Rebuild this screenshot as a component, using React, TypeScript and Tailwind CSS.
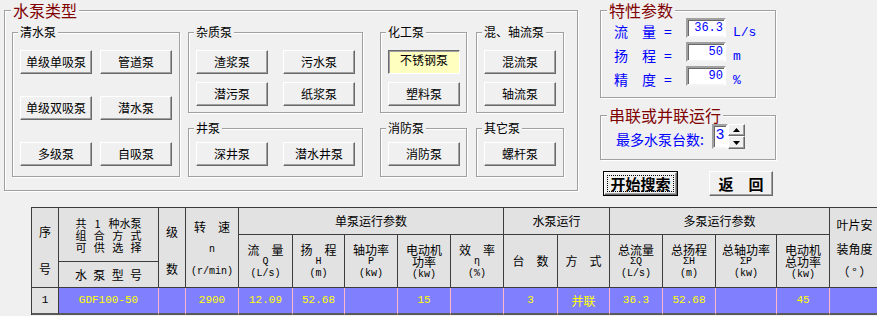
import React from 'react';

const cjk = "font-['Noto_Sans_CJK_SC',sans-serif]";
const mono = "font-['Liberation_Mono',monospace]";
const raised =
  'border border-t-white border-l-white border-r-[#696969] border-b-[#696969] shadow-[inset_-1px_-1px_0_#a0a0a0] bg-[#f0f0f0]';
const sunken =
  'border-2 border-t-[#a0a0a0] border-l-[#a0a0a0] border-r-white border-b-[#f4f4f4] shadow-[inset_1px_1px_0_#696969] bg-white';

const Group: React.FC<{ title: string; big?: boolean; className?: string; children?: React.ReactNode }> = ({
  title, big, className = '', children
}) => (
  <div className={`relative border border-[#a0a0a0] shadow-[inset_1px_1px_0_#ffffff,1px_1px_0_#ffffff] ${className}`}>
    <span
      className={`absolute top-[-1px] -translate-y-1/2 bg-[#f0f0f0] px-[2px] whitespace-nowrap ${
        big ? 'left-[6px] text-[16px] leading-[16px] text-[#800000]' : 'left-[5px] text-[12px] leading-[14px] text-black'
      }`}
    >
      {title}
    </span>
    {children}
  </div>
);

const Btn: React.FC<{ children: React.ReactNode; pressed?: boolean }> = ({ children, pressed }) =>
  pressed ? (
    <div className="w-[72px] h-[24px] flex justify-center pt-[2px] text-[12px] leading-[14px] border border-t-[#696969] border-l-[#696969] border-r-white border-b-white shadow-[inset_1px_1px_0_#a0a0a0] bg-[#ffffc0]">
      {children}
    </div>
  ) : (
    <div className={`w-[72px] h-[24px] flex items-center justify-center text-[12px] leading-[14px] ${raised}`}>{children}</div>
  );

const Arrow: React.FC<{ down?: boolean }> = ({ down }) => (
  <svg width="7" height="4" viewBox="0 0 7 4">
    {down ? <polygon points="0,0 7,0 3.5,4" fill="#000" /> : <polygon points="0,4 7,4 3.5,0" fill="#000" />}
  </svg>
);

const hdr = 'bg-[#e2e2e2] border-r border-b border-[#3c3c3c] flex flex-col items-center text-black';
const cell = 'bg-[#8080ff] border-r border-r-[#ffb8c8] border-b-2 border-b-[#5a5a5a] flex items-center justify-center text-[#ffff00]';

const Spread: React.FC<{ items: string[]; w: string }> = ({ items, w }) => (
  <div className={`flex justify-between ${w}`}>
    {items.map((t, i) => (
      <span key={i}>{t}</span>
    ))}
  </div>
);

const Sub: React.FC<{ top: React.ReactNode; mid?: string; unit: string }> = ({ top, mid, unit }) => (
  <div className={`${hdr} row-span-2 pt-[9px]`}>
    <div className="text-[12px] leading-[12px] whitespace-pre text-center">{top}</div>
    {mid !== undefined && <div className={`${mono} text-[10px] leading-[11px] whitespace-pre`}>{mid}</div>}
    <div className={`${mono} text-[10px] leading-[12px] mt-[1px] whitespace-pre`}>{unit}</div>
  </div>
);

export default function App() {
  return (
    <div className={`w-[877px] h-[316px] bg-[#f0f0f0] overflow-hidden ${cjk} text-black`}>
      <div className="flex items-start h-[207px] pt-[10px] pl-[4px]">
        {/* 水泵类型 */}
        <Group title="水泵类型" big className="w-[574px] h-[181px] pl-[7px] pt-[21px] flex items-start">
          <Group title="清水泵" className="w-[168px] h-[145px] pl-[7px] pt-[17px]">
            <div className="grid grid-cols-[72px_72px] gap-x-[8px] gap-y-[22px]">
              <Btn>单级单吸泵</Btn>
              <Btn>管道泵</Btn>
              <Btn>单级双吸泵</Btn>
              <Btn>潜水泵</Btn>
              <Btn>多级泵</Btn>
              <Btn>自吸泵</Btn>
            </div>
          </Group>
          <div className="ml-[8px] w-[175px] flex flex-col">
            <Group title="杂质泵" className="h-[81px] pl-[7px] pt-[17px]">
              <div className="grid grid-cols-[72px_73px] gap-x-[15px] gap-y-[8px]">
                <Btn>渣浆泵</Btn>
                <Btn>污水泵</Btn>
                <Btn>潜污泵</Btn>
                <Btn>纸浆泵</Btn>
              </div>
            </Group>
            <Group title="井泵" className="mt-[15px] h-[49px] pl-[7px] pt-[13px]">
              <div className="grid grid-cols-[72px_73px] gap-x-[15px]">
                <Btn>深井泵</Btn>
                <Btn>潜水井泵</Btn>
              </div>
            </Group>
          </div>
          <div className="ml-[17px] w-[87px] flex flex-col">
            <Group title="化工泵" className="h-[81px] pl-[7px] pt-[17px] flex flex-col gap-[8px]">
              <Btn pressed>不锈钢泵</Btn>
              <Btn>塑料泵</Btn>
            </Group>
            <Group title="消防泵" className="mt-[15px] h-[49px] pl-[7px] pt-[13px]">
              <Btn>消防泵</Btn>
            </Group>
          </div>
          <div className="ml-[9px] w-[88px] flex flex-col">
            <Group title="混、轴流泵" className="h-[81px] pl-[7px] pt-[17px] flex flex-col gap-[8px]">
              <Btn>混流泵</Btn>
              <Btn>轴流泵</Btn>
            </Group>
            <Group title="其它泵" className="mt-[15px] h-[49px] pl-[7px] pt-[13px]">
              <Btn>螺杆泵</Btn>
            </Group>
          </div>
        </Group>

        {/* right side */}
        <div className="ml-[22px] w-[176px] flex flex-col">
          <Group title="特性参数" big className="h-[88px] pl-[13px] pt-[7px]">
            {[
              ['流　量', '36.3', 'L/s'],
              ['扬　程', '50', 'm'],
              ['精　度', '90', '%']
            ].map(([label, val, unit]) => (
              <div key={label} className="flex h-[20px] mb-[4px] text-[#0000ff]">
                <div className="w-[72px] mt-[5px] text-[14px] leading-[16px] flex">
                  <span>{label}</span>
                  <span className="ml-[8px]">=</span>
                </div>
                <div className={`w-[40px] h-[20px] flex items-center justify-end pr-[1px] ${mono} text-[12px] ${sunken}`}>
                  {val}
                </div>
                <span className={`ml-[7px] mt-[8px] ${mono} text-[13px] leading-[14px]`}>{unit}</span>
              </div>
            ))}
          </Group>
          <Group title="串联或并联运行" big className="mt-[17px] h-[45px] pl-[15px] pt-[8px] flex items-start">
            <div className="w-[96px] mt-[7px] text-[14px] leading-[16px] text-[#0000ff] whitespace-nowrap">最多水泵台数:</div>
            <div className={`w-[16px] h-[25px] flex items-center justify-center ${mono} text-[15px] text-[#0000ff] ${sunken}`}>3</div>
            <div className="flex flex-col">
              <div className={`w-[17px] h-[12px] flex items-center justify-center ${raised}`}>
                <Arrow />
              </div>
              <div className={`w-[17px] h-[13px] flex items-center justify-center ${raised}`}>
                <Arrow down />
              </div>
            </div>
          </Group>
          <div className="flex mt-[11px]">
            <div className="ml-[3px] w-[75px] h-[25px] border border-black">
              <div className={`h-full p-[2px] ${raised}`}>
                <div className="h-full border border-dotted border-black flex items-center justify-center text-[15px] font-bold leading-[16px]">
                  开始搜索
                </div>
              </div>
            </div>
            <div className={`ml-[31px] w-[64px] h-[25px] flex items-center justify-center text-[15px] font-bold leading-[16px] ${raised}`}>
              返　回
            </div>
          </div>
        </div>
      </div>

      {/* table */}
      <div className="ml-[31px] w-[846px] overflow-hidden">
        <div className="grid grid-cols-[27px_100px_27px_53px_54px_52px_53px_53px_53px_54px_52px_53px_53px_61px_53px_50px] grid-rows-[27px_27px_26px_27px] w-[850px] border-l border-t border-[#3c3c3c] text-[12px]">
          <div className={`${hdr} row-span-3 pt-[18px] gap-[25px] leading-[12px]`}>
            <span>序</span>
            <span>号</span>
          </div>
          <div className={`${hdr} row-span-2 justify-center text-[11px] leading-[12px]`}>
            <Spread items={['共', '1', '种水泵']} w="w-[66px]" />
            <Spread items={['组', '合', '方', '式']} w="w-[66px]" />
            <Spread items={['可', '供', '选', '择']} w="w-[66px]" />
          </div>
          <div className={`${hdr} row-span-3 pt-[18px] gap-[25px] leading-[12px]`}>
            <span>级</span>
            <span>数</span>
          </div>
          <div className={`${hdr} row-span-3 pt-[13px] leading-[12px]`}>
            <span className="whitespace-pre">转　速</span>
            <span className={`${mono} text-[10px] mt-[11px]`}>n</span>
            <span className={`${mono} text-[10px] mt-[10px]`}>(r/min)</span>
          </div>
          <div className={`${hdr} col-span-5 justify-center`}>单泵运行参数</div>
          <div className={`${hdr} col-span-2 justify-center`}>水泵运行</div>
          <div className={`${hdr} col-span-4 justify-center`}>多泵运行参数</div>
          <div className={`${hdr} row-span-3 pt-[11px] leading-[12px]`}>
            <span>叶片安</span>
            <span className="mt-[12px]">装角度</span>
            <span className="mt-[11px] whitespace-pre">（ ° ）</span>
          </div>

          <Sub top="流　量" mid="Q" unit="(L/s)" />
          <Sub top="扬　程" mid="H" unit="(m)" />
          <Sub top="轴功率" mid="P" unit="(kw)" />
          <Sub top={<span className="block leading-[12px]">电动机<br />功率</span>} unit="(kw)" />
          <Sub top="效　率" mid="η" unit="(%)" />
          <div className={`${hdr} row-span-2 justify-center whitespace-pre`}>台　数</div>
          <div className={`${hdr} row-span-2 justify-center whitespace-pre`}>方　式</div>
          <Sub top="总流量" mid="ΣQ" unit="(L/s)" />
          <Sub top="总扬程" mid="ΣH" unit="(m)" />
          <Sub top="总轴功率" mid="ΣP" unit="(kw)" />
          <Sub top={<span className="block leading-[12px]">电动机<br />总功率</span>} unit="(kw)" />

          <div className={`${hdr} justify-center`}>
            <Spread items={['水', '泵', '型', '号']} w="w-[67px]" />
          </div>

          <div className={`${hdr} justify-center border-b-2 border-b-[#5a5a5a] ${mono} text-[11px]`}>1</div>
          <div className={`${cell} ${mono} text-[11px]`}>GDF100-50</div>
          <div className={cell}></div>
          <div className={`${cell} ${mono} text-[11px]`}>2900</div>
          <div className={`${cell} ${mono} text-[11px]`}>12.09</div>
          <div className={`${cell} ${mono} text-[11px]`}>52.68</div>
          <div className={cell}></div>
          <div className={`${cell} ${mono} text-[11px]`}>15</div>
          <div className={cell}></div>
          <div className={`${cell} ${mono} text-[11px]`}>3</div>
          <div className={`${cell} text-[12px]`}>并联</div>
          <div className={`${cell} ${mono} text-[11px]`}>36.3</div>
          <div className={`${cell} ${mono} text-[11px]`}>52.68</div>
          <div className={cell}></div>
          <div className={`${cell} ${mono} text-[11px]`}>45</div>
          <div className={cell}></div>
        </div>
      </div>
    </div>
  );
}
